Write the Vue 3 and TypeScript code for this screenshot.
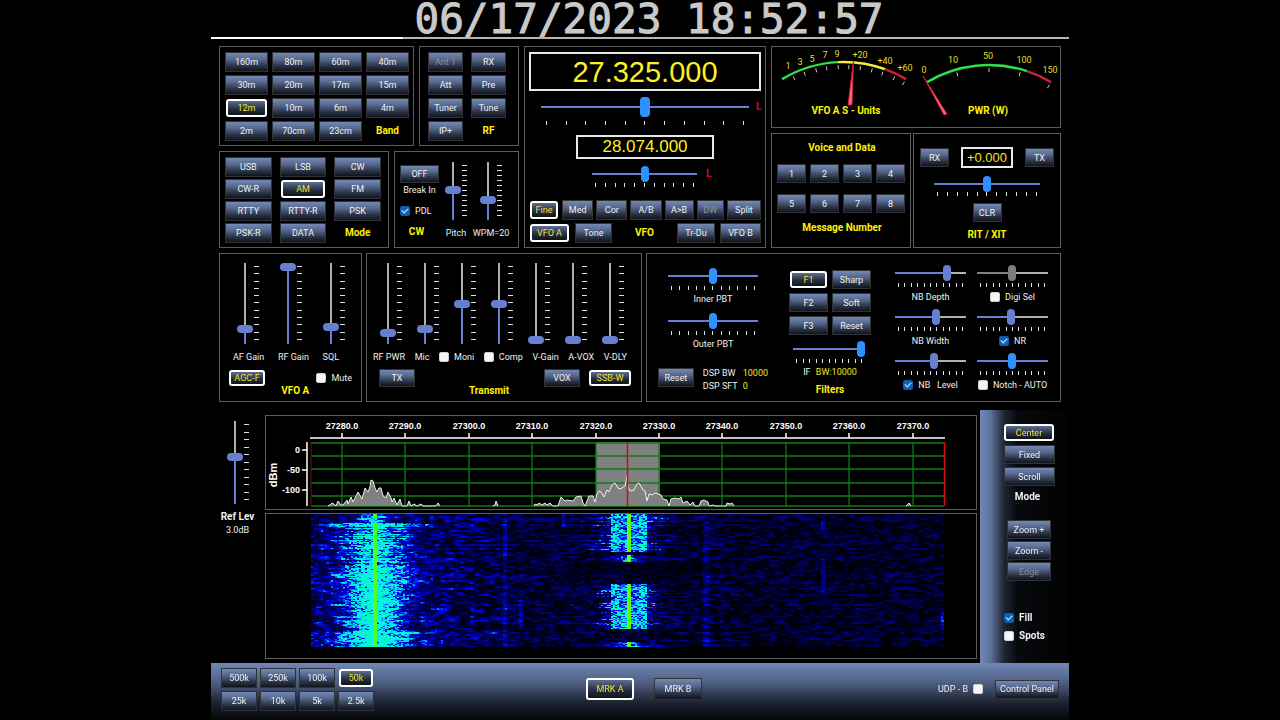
<script setup lang="ts">
import { defineComponent, h, onMounted, ref } from 'vue'

const Slider = defineComponent({
  props: {
    label: { type: String, required: true },
    value: { type: Number, default: 50 },
    vertical: { type: Boolean, default: false },
    disabled: { type: Boolean, default: false },
  },
  setup(props) {
    const level = ref(props.value)
    return () =>
      h('div', { class: ['slider', props.vertical ? 'vert' : 'horz'], style: { '--level': level.value + '%' } }, [
        h('input', {
          type: 'range',
          min: 0,
          max: 100,
          value: level.value,
          disabled: props.disabled,
          'aria-label': props.label,
          onInput: (e: Event) => (level.value = Number((e.target as HTMLInputElement).value)),
        }),
        h('span', { class: 'ticks' }, Array.from({ length: 11 }, () => h('i'))),
      ])
  },
})

const bands = ['160m', '80m', '60m', '40m', '30m', '20m', '17m', '15m', '12m', '10m', '6m', '4m', '2m', '70cm', '23cm']
const band = ref('12m')
const rfButtons = ['Ant 1', 'RX', 'Att', 'Pre', 'Tuner', 'Tune', 'IP+']
const modes = ['USB', 'LSB', 'CW', 'CW-R', 'AM', 'FM', 'RTTY', 'RTTY-R', 'PSK', 'PSK-R', 'DATA']
const mode = ref('AM')
const steps = ['Fine', 'Med', 'Cor', 'A/B', 'A>B', 'DW', 'Split']
const messages = [1, 2, 3, 4, 5, 6, 7, 8]
const filters = ['F1', 'Sharp', 'F2', 'Soft', 'F3', 'Reset']
const filter = ref('F1')
const spans = ['500k', '250k', '100k', '50k', '25k', '10k', '5k', '2.5k']
const span = ref('50k')
const views = ['Center', 'Fixed', 'Scroll']
const view = ref('Center')

const gains = [
  { label: 'AF Gain', value: 15 },
  { label: 'RF Gain', value: 100 },
  { label: 'SQL', value: 18 },
]
const transmit = [
  { label: 'RF PWR', value: 10 },
  { label: 'Mic', value: 15 },
  { label: 'Moni', value: 50, check: true },
  { label: 'Comp', value: 50, check: true },
  { label: 'V-Gain', value: 0 },
  { label: 'A-VOX', value: 0 },
  { label: 'V-DLY', value: 0 },
]
const noise = [
  { label: 'NB Depth', value: 76 },
  { label: 'Digi Sel', value: 49, check: true, disabled: true },
  { label: 'NB Width', value: 59 },
  { label: 'NR', value: 47, check: true, on: true },
  { label: 'NB\u00a0\u00a0 Level', value: 55, check: true, on: true },
  { label: 'Notch - AUTO', value: 49, check: true, bright: true },
]

/* Meter scales: arcs are drawn around a centre below the dial. */
type Dial = { cx: number; cy: number; r: number }
const sDial: Dial = { cx: 72, cy: 136, r: 121 }
const pDial: Dial = { cx: 217, cy: 139, r: 121 }
const on = (d: Dial, x: number, r = d.r) => {
  const a = Math.asin((x - d.cx) / d.r)
  return [d.cx + r * Math.sin(a), d.cy - r * Math.cos(a)].map((n) => n.toFixed(1)).join(' ')
}
const arc = (d: Dial, x1: number, x2: number) => `M${on(d, x1)}A${d.r} ${d.r} 0 0 1 ${on(d, x2)}`
const marks = (d: Dial, xs: number[]) => xs.map((x) => `M${on(d, x, 118)}L${on(d, x, 114)}`).join('')
const sMarks = marks(sDial, [20, 31, 43, 54, 66, 77, 89, 101, 112, 124, 134])
const pMarks = marks(pDial, [184, 217, 249, 279])
const sLabels: [number, number, string][] = [
  [16, 22, '1'], [28, 18, '3'], [40, 15, '5'], [53, 11, '7'], [65, 10, '9'], [88, 11, '+20'], [113, 17, '+40'], [133, 24, '+60'],
]
const pLabels: [number, number, string][] = [
  [152, 26, '0'], [181, 16, '10'], [216, 12, '50'], [252, 16, '100'], [278, 26, '150'],
]

/* Spectrum scope */
const freqs = Array.from({ length: 10 }, (_, i) => ({ x: Math.round(76 + i * 63.4), text: `${27280 + i * 10}.0` }))
const rows = [27, 40, 53, 67, 80, 90]
const leftTrace: number[][] = [
  [62, 0], [64, 1], [66, 3], [68, 2], [70, 0], [72, 5], [75, 1], [77, 1], [81, 6], [82, 2], [85, 9], [87, 4], [92, 14], [96, 7],
  [99, 18], [102, 14], [104, 19], [105, 26], [107, 25], [109, 18], [111, 14], [113, 18], [115, 18], [117, 10], [120, 8], [122, 14],
  [125, 8], [126, 4], [128, 8], [131, 1], [134, 7], [136, 0], [141, 0], [143, 5], [145, 0], [148, 2], [151, 0], [155, 2], [157, 0],
  [170, 0], [172, 3], [174, 0],
]
const rightTrace: number[][] = [
  [268, 0], [269, 2], [271, 1], [273, 3], [276, 1], [279, 3], [281, 1], [284, 3], [287, 0], [292, 0], [295, 9], [299, 5], [301, 6],
  [307, 5], [310, 9], [315, 10], [317, 3], [319, 0], [323, 10], [327, 10], [329, 4], [331, 12], [333, 15], [335, 14], [338, 9],
  [341, 16], [343, 14], [346, 21], [349, 23], [352, 18], [355, 17], [357, 19], [359, 20], [361, 30], [362, 19], [364, 15], [368, 16],
  [371, 22], [373, 23], [377, 16], [379, 15], [381, 5], [383, 12], [386, 11], [389, 13], [392, 12], [395, 11], [397, 7], [401, 6],
  [403, 0], [405, 7], [409, 8], [413, 7], [415, 9], [417, 3], [421, 5], [424, 1], [427, 4], [429, 0], [433, 0], [435, 5], [438, 6],
  [442, 4], [443, 0], [447, 1], [449, 0], [460, 0], [461, 3], [464, 2], [466, 3], [468, 0],
]
const line = (pts: number[][]) => 'M' + pts.map(([x, y]) => `${x} ${90 - y}`).join('L')
const trace = [leftTrace, [[227, 0], [229, 1], [230, 5], [232, 0]], rightTrace, [[640, 0], [643, 3], [645, 0]]].map(line)

/* Waterfall */
const fall = ref<HTMLCanvasElement | null>(null)
const ramp: number[][] = [
  [0, 0, 0, 0], [0.3, 0, 0, 120], [0.5, 0, 0, 240], [0.62, 0, 90, 255], [0.74, 0, 225, 255], [0.88, 10, 255, 190], [1, 90, 255, 20],
]
function tint(v: number): number[] {
  const t = Math.max(0, Math.min(1, v))
  const i = Math.max(1, ramp.findIndex((s) => s[0] >= t))
  const a = ramp[i - 1]
  const b = ramp[i]
  const k = (t - a[0]) / (b[0] - a[0])
  return [1, 2, 3].map((c) => a[c] + (b[c] - a[c]) * k)
}
function generator(seed: number) {
  return () => {
    seed = (seed + 0x6d2b79f5) | 0
    let t = Math.imul(seed ^ (seed >>> 15), 1 | seed)
    t = (t + Math.imul(t ^ (t >>> 7), 61 | t)) ^ t
    return ((t ^ (t >>> 14)) >>> 0) / 4294967296
  }
}
function drawWaterfall(canvas: HTMLCanvasElement) {
  const ctx = canvas.getContext('2d')
  if (!ctx) return
  const { width: w, height: ht } = canvas
  const rnd = generator(27325)
  const img = ctx.createImageData(w, ht)
  let coarse: number[] = []
  let busy = 0
  for (let y = 0; y < ht; y++) {
    if (y % 2 === 0) {
      coarse = Array.from({ length: Math.ceil(w / 5) + 2 }, () => rnd())
      busy = rnd() < 0.35 ? 0.16 : 0
    }
    const streak = rnd()
    let gain = 1.0
    let reach = 26
    if (y < 9) { gain = 0.5; reach = 18 }
    else if (y < 13) { gain = 1.05; reach = 42 }
    else if (y < 53) { gain = streak < 0.5 ? 0.5 : 0.95; reach = streak < 0.5 ? 22 : 32 }
    else if (y < 92) { gain = 1.1; reach = 30 }
    else if (y < 117) { gain = 0.95; reach = 23 }
    else { gain = 1.1; reach = 30 }
    const second = y < 38 || (y > 69 && y < 115)
    const burst = (y > 40 && y < 48) || y > 127
    const flare = rnd() < 0.2
    for (let x = 0; x < w; x += 2) {
      const c = Math.floor(x / 5)
      const f = x / 5 - c
      const n = coarse[c] * (1 - f) + coarse[c + 1] * f
      const d1 = Math.abs(x - 63)
      const density = x < 190 ? 0.66 : x < 420 ? 0.48 : 0.44
      const quiet = y > 48 && y < 70 && x > 250 && x < 390 ? 0.6 : 1
      let v = Math.max(0, n - 0.42 + busy) * density * quiet + rnd() * 0.05
      if (y > 116) v += x < 210 ? 0.1 * rnd() : 0
      v += gain * Math.exp(-Math.pow(d1 / reach, 2)) * (0.3 + 0.65 * rnd())
      v += (y > 9 ? 0.55 : 0.3) * Math.exp(-d1 / 58) * rnd()
      if (d1 > 2) v = Math.min(v, 0.78 + 0.1 * rnd())
      else v = y > 9 || y < 3 ? 0.98 : 0.6 + 0.3 * rnd()
      const d2 = Math.abs(x - 317)
      if (second) {
        if (d2 < 3) v = 1
        else if (d2 < 19) v += (d2 > 9 || y > 97 ? 0.66 : 0.52) * (0.5 + 0.95 * rnd())
        else v += (flare ? 0.8 : 0.36) * Math.exp(-(d2 - 19) / (flare ? 22 : 9)) * rnd()
        if (d2 > 2 && d2 < 60) v = Math.min(v, 0.86)
      } else if (burst) {
        const peak = y < 48 ? (y - 40) * 2 : (y - 126) * 3
        if (d2 < 3) v = 0.98
        else v += 0.85 * Math.exp(-d2 / (4 + peak)) * (0.4 + 0.7 * rnd())
      }
      if (Math.abs(x - 193) < 2 && rnd() < 0.8) v += 0.22
      if (Math.abs(x - 209) < 2 && y > 84 && y < 116) v += 0.24
      if (Math.abs(x - 394) < 3) v += 0.16 * rnd() + 0.06
      if (Math.abs(x - 511) < 2 && ((y > 7 && y < 17) || (y > 44 && y < 80))) v += 0.24
      if (Math.abs(x - 251) < 2 && y < 13) v += 0.28
      if (x > 629 && y > 97 && y < 116) v += 0.3
      const rgb = tint(v)
      for (let k = 0; k < 2 && x + k < w; k++) {
        const o = (y * w + x + k) * 4
        img.data[o] = rgb[0]
        img.data[o + 1] = rgb[1]
        img.data[o + 2] = rgb[2]
        img.data[o + 3] = 255
      }
    }
  }
  ctx.putImageData(img, 0, 0)
}
onMounted(() => fall.value && drawWaterfall(fall.value))
</script>

<template>
  <main class="rig">
    <header class="clock"><time datetime="2023-06-17T18:52:57">06/17/2023 18:52:57</time></header>

    <div class="upper">
      <div class="col">
        <div class="pair bands">
          <section class="panel keys four">
            <button v-for="b in bands" :key="b" type="button" :class="{ on: band === b }" @click="band = b">{{ b }}</button>
            <h2>Band</h2>
          </section>
          <section class="panel keys rf">
            <button v-for="b in rfButtons" :key="b" type="button" :disabled="b === 'Ant 1'">{{ b }}</button>
            <h2>RF</h2>
          </section>
        </div>
        <div class="pair modes">
          <section class="panel keys three">
            <button v-for="m in modes" :key="m" type="button" :class="{ on: mode === m }" @click="mode = m">{{ m }}</button>
            <h2>Mode</h2>
          </section>
          <section class="panel cw">
            <div class="breakin">
              <button type="button">OFF</button>
              <span>Break In</span>
              <label class="tick"><input type="checkbox" checked />PDL</label>
              <h2>CW</h2>
            </div>
            <div class="lever"><Slider label="Pitch" :value="52" vertical /><span>Pitch</span></div>
            <div class="lever"><Slider label="WPM" :value="33" vertical /><span>WPM=20</span></div>
          </section>
        </div>
      </div>

      <section class="panel vfo">
        <output class="freq">27.325.000</output>
        <div class="tune"><Slider class="big" label="VFO A tuning" /><b>L</b></div>
        <output class="freq sub">28.074.000</output>
        <div class="tune sub"><Slider class="bright" label="VFO B tuning" /><b>L</b></div>
        <div class="steps">
          <button v-for="s in steps" :key="s" type="button" :class="{ on: s === 'Fine' }" :disabled="s === 'DW'">{{ s }}</button>
        </div>
        <div class="select">
          <button type="button" class="on">VFO A</button>
          <button type="button">Tone</button>
          <h2>VFO</h2>
          <button type="button">Tr-Du</button>
          <button type="button">VFO B</button>
        </div>
      </section>

      <div class="col">
        <section class="panel">
          <svg class="meters" viewBox="0 0 288 80" role="img" aria-label="S meter and power meter">
            <g fill="none" stroke-width="2.4">
              <path :d="arc(sDial, 10, 66)" stroke="#2fe04a" />
              <path :d="arc(sDial, 66, 113)" stroke="#f4ee3a" />
              <path :d="arc(sDial, 113, 134)" stroke="#d02038" />
              <path :d="arc(pDial, 155, 255)" stroke="#2fe04a" />
              <path :d="arc(pDial, 255, 279)" stroke="#d02038" />
              <path :d="sMarks + pMarks" stroke="#c8c8c8" stroke-width="1" />
            </g>
            <path d="M81.500 14L76 58L80 58Z" fill="#f07080" stroke="#d01830" stroke-width="1" />
            <path d="M151 29L172 68L175 67Z" fill="#f07080" stroke="#d01830" stroke-width="1" />
            <text v-for="l in sLabels" :key="'s' + l[2]" :x="l[0]" :y="l[1]">{{ l[2] }}</text>
            <text v-for="l in pLabels" :key="'p' + l[2]" :x="l[0]" :y="l[1]">{{ l[2] }}</text>
            <text class="name" x="74" y="67">VFO A S - Units</text>
            <text class="name" x="216" y="67">PWR (W)</text>
          </svg>
        </section>
        <div class="pair voice">
          <section class="panel memo">
            <h2>Voice and Data</h2>
            <div class="msgs"><button v-for="m in messages" :key="m" type="button">{{ m }}</button></div>
            <h2>Message Number</h2>
          </section>
          <section class="panel rit">
            <div class="shift">
              <button type="button">RX</button>
              <output>+0.000</output>
              <button type="button">TX</button>
            </div>
            <Slider class="bright" label="RIT / XIT offset" />
            <button type="button">CLR</button>
            <h2>RIT / XIT</h2>
          </section>
        </div>
      </div>
    </div>

    <div class="middle">
      <section class="panel gain">
        <div class="levers"><Slider v-for="g in gains" :key="g.label" v-bind="g" vertical /></div>
        <div class="names"><span v-for="g in gains" :key="g.label">{{ g.label }}</span></div>
        <div class="base">
          <button type="button" class="on">AGC-F</button>
          <h2>VFO A</h2>
          <label class="tick"><input type="checkbox" />Mute</label>
        </div>
      </section>

      <section class="panel tx">
        <div class="levers"><Slider v-for="t in transmit" :key="t.label" :label="t.label" :value="t.value" vertical /></div>
        <div class="names">
          <template v-for="t in transmit" :key="t.label">
            <label v-if="t.check" class="tick"><input type="checkbox" />{{ t.label }}</label>
            <span v-else>{{ t.label }}</span>
          </template>
        </div>
        <div class="base">
          <button type="button">TX</button>
          <h2>Transmit</h2>
          <div class="vox">
            <button type="button">VOX</button>
            <button type="button" class="on">SSB-W</button>
          </div>
        </div>
      </section>

      <section class="panel filter">
        <div class="pbt">
          <Slider class="bright" label="Inner PBT" /><span>Inner PBT</span>
          <Slider class="bright" label="Outer PBT" /><span>Outer PBT</span>
          <div class="dsp">
            <button type="button">Reset</button>
            <dl>
              <dt>DSP BW</dt><dd>10000</dd>
              <dt>DSP SFT</dt><dd>0</dd>
            </dl>
          </div>
        </div>
        <div class="shape">
          <div class="shapes">
            <button v-for="f in filters" :key="f" type="button" :class="{ on: filter === f }">{{ f }}</button>
          </div>
          <Slider class="bright" label="IF bandwidth" :value="100" />
          <p>IF <em>BW:10000</em></p>
          <h2>Filters</h2>
        </div>
        <div class="noise">
          <div v-for="n in noise" :key="n.label" class="cell">
            <Slider :class="{ bright: n.bright }" :label="n.label" :value="n.value" :disabled="n.disabled" />
            <label v-if="n.check" class="tick"><input type="checkbox" :checked="n.on" />{{ n.label }}</label>
            <span v-else>{{ n.label }}</span>
          </div>
        </div>
      </section>
    </div>

    <div class="lower">
      <div class="ref">
        <Slider label="Ref Lev" :value="57" vertical />
        <strong>Ref Lev</strong>
        <span>3.0dB</span>
      </div>
      <div class="scope">
        <section class="panel">
          <svg class="spectrum" viewBox="0 0 710 93" role="img" aria-label="Spectrum scope">
            <rect x="330" y="26" width="64" height="64" fill="#808080" />
            <g stroke="#0f7d12" stroke-width="1.300">
              <line v-for="y in rows" :key="y" x1="45" x2="678" :y1="y" :y2="y" />
              <line v-for="f in freqs" :key="f.x" :x1="f.x" :x2="f.x" y1="26" y2="90" />
            </g>
            <path d="M45 26V90" stroke="#7a0c0c" />
            <path d="M678.500 26V90" stroke="#d01010" stroke-width="1.500" />
            <g stroke="#fff" stroke-width="1.500">
              <path d="M44 22H679" />
              <path d="M41 26V90M36 34H41M36 54H41M36 74H41" />
              <line v-for="f in freqs" :key="f.x" :x1="f.x" :x2="f.x" y1="17" y2="22" />
            </g>
            <path v-for="(t, i) in trace" :key="i" :d="t" fill="#808080" stroke="#eee" stroke-width="1" />
            <path d="M361.500 26V90" stroke="#c01018" stroke-width="1.500" />
            <text v-for="f in freqs" :key="f.text" class="mid" :x="f.x" y="13">{{ f.text }}</text>
            <text class="end" x="34" y="37">0</text>
            <text class="end" x="34" y="57">-50</text>
            <text class="end" x="34" y="77">-100</text>
            <text class="unit" transform="translate(11 59) rotate(-90)">dBm</text>
          </svg>
        </section>
        <section class="panel fall">
          <canvas ref="fall" width="633" height="133"></canvas>
        </section>
      </div>
      <aside class="side">
        <button v-for="v in views" :key="v" type="button" :class="{ on: view === v }" @click="view = v">{{ v }}</button>
        <strong>Mode</strong>
        <div class="zoom">
          <button type="button">Zoom +</button>
          <button type="button">Zoom -</button>
          <button type="button" disabled>Edge</button>
        </div>
        <label class="tick"><input type="checkbox" checked />Fill</label>
        <label class="tick"><input type="checkbox" />Spots</label>
      </aside>
    </div>

    <footer class="bar">
      <div class="spans">
        <button v-for="s in spans" :key="s" type="button" :class="{ on: span === s }" @click="span = s">{{ s }}</button>
      </div>
      <div class="markers">
        <button type="button" class="on">MRK A</button>
        <button type="button">MRK B</button>
      </div>
      <div class="panelctl">
        <label class="tick">UDP - B<input type="checkbox" /></label>
        <button type="button">Control Panel</button>
      </div>
    </footer>
  </main>
</template>

<style>
html, body { background: #000; }
</style>

<style scoped>
.rig {
  max-width: 858px;
  margin: 0 auto;
  color: #f0f0f0;
  font: 9px/12px Roboto, "Liberation Sans", Arial, sans-serif;
  white-space: nowrap;
}
.rig * { box-sizing: border-box; }
h2, strong {
  margin: 0;
  font-size: 10px;
  line-height: 12px;
  font-weight: 700;
  text-align: center;
}
h2 { color: #fff200; }
.panel { border: 1px solid #5c5c5c; }
button {
  display: block;
  min-width: 0;
  height: 20px;
  margin: 0;
  padding: 0;
  color: #f0f0f0;
  font: inherit;
  background: linear-gradient(#7388b4, #56688c 35%, #2c364a 70%, #10141c);
  border: 1px solid #303236;
}
button:disabled { color: #8c9098; }
button.on {
  height: 18px;
  margin: 1px;
  color: #f0e030;
  border: 2px solid #fff;
  border-radius: 3px;
  background: linear-gradient(#5c6e92, #232b3c 60%, #10141c);
}
.tick { display: flex; align-items: center; gap: 5px; }
.tick input {
  appearance: none;
  display: grid;
  place-items: center;
  width: 10px;
  height: 10px;
  margin: 0;
  background: #f6f6f6;
  border: 1px solid #d0d0d0;
  border-radius: 2px;
}
.tick input:checked { background: #0a64b8; border-color: #0a5aa6; }
.tick input:checked::after {
  content: "";
  width: 5px;
  height: 3px;
  border: solid #dfe9f5;
  border-width: 0 0 1px 1px;
  transform: translateY(-1px) rotate(-45deg);
}

.clock {
  height: 39px;
  padding: 2px 0 2px 18px;
  color: #c9c9c9;
  font: 41px/35px "DejaVu Sans Mono", monospace;
  -webkit-text-stroke: 1px #c9c9c9;
  text-align: center;
  background: linear-gradient(90deg, #fff 192px, #b4b4b4 192px) bottom / 100% 2px no-repeat;
}

/* sliders */
.slider { display: flex; --fill: #6680d8; --rest: #b0b0b0; }
.slider :deep(input) { appearance: none; margin: 0; padding: 0; background: none; }
.slider :deep(input::-webkit-slider-thumb) { appearance: none; background: #6680d0; border-radius: 4px; }
.slider :deep(.ticks) { display: flex; justify-content: space-between; }
.slider :deep(i) { background: #e0e0e0; }
.vert { gap: 1px; width: 22px; height: 81px; }
.vert :deep(input) {
  width: 16px;
  height: 100%;
  writing-mode: vertical-lr;
  direction: rtl;
  background: linear-gradient(to top, var(--fill) var(--level), var(--rest) var(--level)) center / 2px 100% no-repeat;
}
.vert :deep(input::-webkit-slider-thumb) { width: 16px; height: 8px; }
.vert :deep(.ticks) { flex-direction: column; width: 5px; padding: 3px 0 4px; }
.vert :deep(i) { width: 5px; height: 1px; }
.horz { flex-direction: column; gap: 2px; }
.horz :deep(input) {
  width: 100%;
  height: 16px;
  background: linear-gradient(to right, var(--fill) var(--level), var(--rest) var(--level)) center / 100% 2px no-repeat;
}
.horz :deep(input::-webkit-slider-thumb) { width: 8px; height: 16px; }
.horz :deep(input:disabled) { --fill: #808080; }
.horz :deep(input:disabled::-webkit-slider-thumb) { background: #7c7c7c; }
.horz :deep(.ticks) { height: 4px; padding: 0 3px; }
.horz :deep(i) { width: 1px; height: 4px; }
.bright, .big { --rest: #6680d8; }
.bright :deep(input::-webkit-slider-thumb), .big :deep(input::-webkit-slider-thumb) { background: #2f90ff; }
.big { gap: 4px; }
.big :deep(input) { height: 20px; }
.big :deep(input::-webkit-slider-thumb) { width: 10px; height: 20px; }
.big :deep(.ticks) { padding: 0 5px; }

/* upper block */
.upper { display: grid; grid-template-columns: 300fr 242fr 290fr; gap: 5px; padding: 7px 8px 0; }
.col { display: flex; flex-direction: column; gap: 5px; }
.pair { display: grid; gap: 5px; }
.bands { grid-template-columns: 195fr 100fr; }
.modes { grid-template-columns: 170fr 125fr; flex: 1; }
.voice { grid-template-columns: 140fr 148fr; gap: 2px; flex: 1; }
.keys { display: grid; align-items: center; align-content: start; }
.four { grid-template-columns: repeat(4, 1fr); gap: 3px 4px; padding: 5px 4px 4px 5px; }
.rf { grid-template-columns: 1fr 1fr; gap: 3px 8px; padding: 5px 12px 4px 8px; }
.three { grid-template-columns: repeat(3, 1fr); gap: 2px 8px; padding: 5px 7px 4px 5px; }
.cw {
  display: grid;
  grid-template-columns: minmax(0, 39fr) minmax(0, 28fr) minmax(0, 36fr);
  gap: 3px;
  padding: 10px 9px 0 5px;
  text-align: center;
}
.breakin { display: flex; flex-direction: column; padding-top: 3px; }
.breakin button { height: 18px; margin-bottom: 1px; }
.breakin .tick { margin: 9px 0; }
.breakin h2 { padding-right: 6px; }
.lever { display: flex; flex-direction: column; align-items: center; gap: 7px; }
.lever .slider { height: 58px; }

.vfo { padding: 5px 4px 4px; }
.freq {
  display: block;
  height: 39px;
  color: #ffee22;
  font: 29px/37px "Liberation Sans", Arial, sans-serif;
  text-align: center;
  border: 2px solid #e8e8e8;
}
.freq.sub { width: 138px; height: 24px; margin: 10px auto 7px; font-size: 17px; line-height: 20px; }
.tune { display: flex; gap: 7px; padding: 6px 0 0 12px; }
.tune .slider { flex: 1; }
.tune b { width: 5px; color: #e00020; font-size: 10px; line-height: 20px; }
.tune.sub { gap: 9px; padding: 0 50px 0 63px; }
.tune.sub .slider { gap: 1px; }
.tune.sub b { line-height: 16px; }
.steps { display: grid; grid-template-columns: 30fr 31fr 31fr 31fr 29fr 27fr 34fr; gap: 3px; margin-top: 13px; }
.select { display: grid; grid-template-columns: 41px 37px 1fr 38px 41px; gap: 5px; align-items: center; margin-top: 3px; }

.meters { display: block; width: 100%; fill: #e8dc28; text-anchor: middle; }
.meters .name { fill: #fff200; font-size: 10px; font-weight: 700; }

.memo { padding: 8px 3px 0 5px; }
.msgs { display: grid; grid-template-columns: repeat(4, 1fr); gap: 11px 4px; margin: 10px 0 9px; padding-right: 2px; }
.msgs button { height: 19px; }
.rit { display: flex; flex-direction: column; align-items: center; padding: 13px 6px 0; }
.shift { display: flex; justify-content: space-between; align-items: center; width: 100%; }
.rit button { width: 29px; height: 19px; }
.shift output {
  width: 52px;
  height: 21px;
  color: #f4e428;
  font: 13px/17px "Liberation Sans", Arial, sans-serif;
  text-align: center;
  border: 2px solid #e8e8e8;
}
.rit .slider { gap: 0; width: 106px; margin: 8px 0 7px; }
.rit h2 { margin-top: 7px; }

/* middle block */
.middle { display: grid; grid-template-columns: 143fr 276fr 415fr; gap: 4px; padding: 5px 8px 0; }
.gain, .tx { padding-top: 9px; padding-bottom: 4px; }
.levers { display: grid; grid-auto-flow: column; grid-auto-columns: 1fr; justify-items: center; }
.names { display: flex; justify-content: space-between; margin: 7px 0 6px; }
.base { display: grid; grid-template-columns: 46px 1fr auto; height: 28px; }
.base h2 { align-self: end; }
.base button { width: 36px; height: 18px; }
.base button.on { height: 16px; margin-top: 1px; }
.base .tick { height: 18px; }
.gain .levers { padding: 0 6px; }
.gain .names { padding: 0 22px 0 13px; }
.gain .base { padding: 0 9px 0 8px; }
.tx .levers { padding: 0 10px 0 5px; }
.tx .names { padding: 0 14px 0 6px; }
.tx .base { grid-template-columns: 55px 1fr auto; padding: 0 9px 0 12px; }
.vox { display: flex; gap: 8px; }
.vox button.on { width: 42px; }

.filter {
  display: grid;
  grid-template-columns: minmax(0, 131fr) minmax(0, 106fr) minmax(0, 153fr);
  padding: 0 12px 0 11px;
  text-align: center;
}
.pbt { display: flex; flex-direction: column; padding: 14px 21px 0 0; }
.pbt .slider { margin: 0 10px 3px; }
.pbt > span { margin-bottom: 8px; }
.dsp { display: flex; gap: 9px; margin-top: 9px; }
.dsp button { width: 38px; height: 19px; margin-top: 1px; }
.dsp dl { display: grid; grid-template-columns: auto auto; gap: 1px 5px; margin: 0; text-align: left; }
.dsp dd { margin: 0; color: #f4e428; }
.shape { padding: 16px 24px 0 0; }
.shapes { display: grid; grid-template-columns: 1fr 1fr; gap: 4px; margin-bottom: 6px; }
.shapes button { height: 19px; }
.shapes button.on { height: 17px; }
.shape .slider { margin: 0 6px 3px 4px; }
.shape p { margin: 0 0 6px; }
.shape em { margin-left: 3px; color: #f4e428; font-style: normal; }
.noise {
  display: grid;
  grid-template-columns: minmax(0, 1fr) minmax(0, 1fr);
  grid-auto-rows: 44px;
  column-gap: 11px;
  align-content: start;
  padding-top: 11px;
}
.noise .slider { margin-bottom: 4px; }
.noise .tick { justify-content: center; }

/* lower block */
.lower { display: grid; grid-template-columns: 54px 1fr 89px; margin-top: 8px; }
.ref { display: flex; flex-direction: column; align-items: center; padding: 11px 4px 0 3px; }
.ref .slider { height: 83px; margin-bottom: 7px; }
.ref strong { margin-bottom: 1px; }
.scope { display: flex; flex-direction: column; gap: 3px; padding: 5px 3px 4px 0; }
.spectrum { display: block; width: 100%; fill: #fff; font: 700 9px "Liberation Sans", Arial, sans-serif; }
.mid { text-anchor: middle; }
.end { text-anchor: end; }
.unit { text-anchor: middle; font-size: 11px; }
.fall { padding: 0 32px 11px 45px; }
.fall canvas { display: block; width: 100%; height: 133px; }
.side {
  display: flex;
  flex-direction: column;
  gap: 3px;
  padding: 13px 14px 0 24px;
  background: linear-gradient(90deg, #7088b6, #5d7299 12%, #1e2636 27%, #07090d 42%, #020203);
}
.side button { height: 19px; }
.side button.on { width: 50px; height: 17px; margin: 1px 0; }
.side strong { margin: 2px 4px 0 0; }
.zoom { display: grid; gap: 2px; margin: 14px 4px 28px 3px; }
.side .tick { font-size: 10px; font-weight: 700; margin-bottom: 3px; }

.bar {
  display: grid;
  grid-template-columns: 1fr auto 1fr;
  align-items: center;
  min-height: 57px;
  padding: 0 10px 5px;
  background: linear-gradient(#7088b6, #4d5e80 35%, #1c2331 70%, #040507);
}
.spans { display: grid; grid-template-columns: repeat(4, 36px); gap: 3px; }
.markers { display: flex; align-items: center; gap: 20px; margin-left: 8px; }
.markers button { width: 48px; height: 22px; margin: 0; }
.panelctl { display: flex; align-items: center; justify-content: flex-end; gap: 12px; }
.panelctl button { width: 64px; height: 19px; }
</style>
